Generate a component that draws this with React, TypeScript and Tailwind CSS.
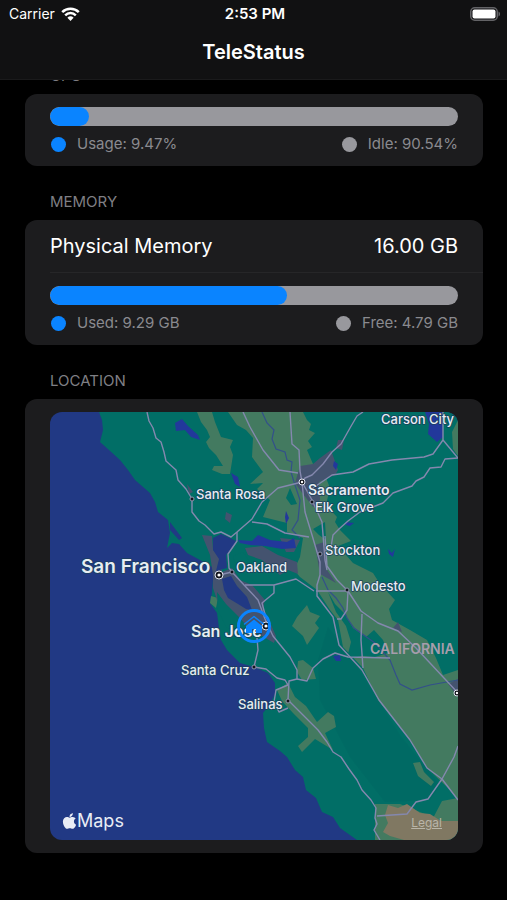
import type { ReactNode } from 'react';
import { FaApple } from 'react-icons/fa';

const WATER = '#213984';
const FOREST = '#016e66';
const VALLEY = '#437a60';
const URBAN = '#44536f';
const ROAD = '#8488ae';

const roads = [
  // US-101 north
  'M147 412 L149 421 L153 428 L156 438 L161 442 L164 452 L166 461 L176 470 L178 480 L186 489 L192 499 L192 512 L199 521 L205 525 L214 534 L221 532 L231 537 L237 532',
  // I-80
  'M237 532 L252 519 L262 502 L278 488 L302 482 L305 478 L312 475 L323 464 L332 452 L341 444 L350 428 L357 416 L363 412',
  'M237 532 L237 541 L228 554 L229 568 L232 572 L219 575',
  // I-5 north
  'M250 427 L263 450 L279 470 L298 473 M290 412 L292 444 L299 450 L300 471 L302 482',
  'M243 412 L250 427',
  // US-50
  'M313 488 L332 475 L353 472 L369 464 L392 460 L424 457 L433 454 L443 440 L443 412',
  'M458 458 L445 459 L441 467 L430 468 L424 477 L416 481 L412 486 L393 493 L383 503 L360 512 L348 521 L339 529 L333 535 L331 547',
  'M443 440 L458 458',
  'M302 482 L312 500 L322 522 L325 560 L327 570',
  'M302 482 L305 512 L312 535 L317 552 L320 562 L320 575 L317 585 L317 596 L333 617 L339 645 L362 670 L379 700 L410 740 L427 768 L442 779 L458 800',
  'M325 536 L327 566 L337 580 L348 591 L361 611 L378 623 L398 631 L416 648 L458 693',
  'M232 572 L245 586 L258 600 L265 619 L273 636 L290 657 L297 670 L297 679 L289 681 L288 700 L303 715 L318 730 L327 742 L333 752 L341 757 L349 769 L357 780 L362 790 L371 800 L376 808 L375 818 L377 824 L374 830 L380 840',
  'M245 585 L274 585 L296 579 L314 591 M274 585 L274 593 L262 603 L266 618',
  'M254 667 L258 650 L257 638',
  'M254 667 L266 669 L277 678 L285 680 L288 685 L276 690 L274 702 L279 712 L288 708',
  'M297 679 L307 681 L313 668 L323 659 L335 653 L348 657 L390 658',
  'M362 614 L361 640 L363 668',
  'M348 591 L347 610 L341 619 L337 619',
  'M316 591 L347 591',
  'M252 522 L267 524 L285 533 L309 537',
  'M377 816 L407 814 L416 802 L428 799 L442 779 L454 757 L458 746',
];

const rivers = [
  'M262 412 L267 423 L274 430 L272 439 L276 449 L285 452 L287 460 L292 462 L291 472 L294 482 L300 500 L298 520 L292 530 L300 538',
  'M322 577 L328 590 L336 598 L343 608 L347 618 L354 628 L365 636 L375 643 L390 660 L396 675 L400 684 L412 690 L430 685 L458 680',
];

const cities = [
  { x: 192, y: 499, r: 2 },
  { x: 302, y: 482, r: 3, major: true },
  { x: 312, y: 502, r: 2 },
  { x: 320, y: 554, r: 2 },
  { x: 347, y: 590, r: 2 },
  { x: 232, y: 572, r: 2 },
  { x: 219, y: 575, r: 4, major: true },
  { x: 266, y: 626, r: 4, major: true },
  { x: 254, y: 667, r: 2 },
  { x: 288, y: 701, r: 2 },
  { x: 457, y: 693, r: 3, major: true },
];

const labels = [
  { name: 'Carson City', x: 381, y: 424, cls: 'text-[13px] font-medium' },
  { name: 'Santa Rosa', x: 196, y: 499, cls: 'text-[13px] font-medium' },
  { name: 'Sacramento', x: 308, y: 495, cls: 'text-[14px] font-semibold' },
  { name: 'Elk Grove', x: 315, y: 512, cls: 'text-[13px] font-medium' },
  { name: 'Stockton', x: 325, y: 555, cls: 'text-[13px] font-medium' },
  { name: 'Modesto', x: 351, y: 591, cls: 'text-[13px] font-medium' },
  { name: 'Oakland', x: 236, y: 572, cls: 'text-[13px] font-medium' },
  { name: 'San Francisco', x: 81, y: 573, cls: 'text-[19px] font-semibold' },
  { name: 'San Jose', x: 191, y: 637, cls: 'text-[16px] font-semibold' },
  { name: 'Santa Cruz', x: 181, y: 675, cls: 'text-[13px] font-medium' },
  { name: 'Salinas', x: 238, y: 709, cls: 'text-[13px] font-medium' },
];

function WifiIcon() {
  return (
    <svg className="h-[14px] w-[19px]" viewBox="0 0 19 14" fill="none" stroke="#fff" strokeWidth="2.5">
      <path d="M1.2 5.1 A11.8 11.8 0 0 1 17.8 5.1" />
      <path d="M4.2 8.3 A7.5 7.5 0 0 1 14.8 8.3" />
      <path d="M9.5 14 L6.4 10.7 A4.6 4.6 0 0 1 12.6 10.7 Z" fill="#fff" stroke="none" />
    </svg>
  );
}

function BatteryIcon() {
  return (
    <svg className="h-[14px] w-[31px]" viewBox="0 0 31 14">
      <rect x="0.75" y="0.75" width="26.5" height="12.5" rx="4" fill="none" stroke="#636366" strokeWidth="1.5" />
      <rect x="2.5" y="2.5" width="23" height="9" rx="2" fill="#fff" />
      <path d="M28.5 4.5 C30.6 5.4 30.6 8.6 28.5 9.5 Z" fill="#636366" />
    </svg>
  );
}

function Section({ title, children }: { title: string; children: ReactNode }) {
  return (
    <section>
      <h2 className="px-[25px] pt-6 pb-[6px] text-[15px] leading-6 text-[#7f7f84] uppercase">{title}</h2>
      <div className="overflow-hidden rounded-xl bg-[#1c1c1e]">{children}</div>
    </section>
  );
}

function UsageBar({ label, percent, left, right }: { label: string; percent: number; left: string; right: string }) {
  return (
    <div className="px-[25px] pt-[13px] pb-3">
      <div
        role="progressbar"
        aria-label={label}
        aria-valuenow={percent}
        aria-valuemin={0}
        aria-valuemax={100}
        className="h-[19px] overflow-hidden rounded-full bg-[#98989d]"
      >
        <div className="h-full rounded-full bg-[#0a84ff]" style={{ width: `${percent}%` }} />
      </div>
      <div className="mt-2 flex justify-between text-[15px] leading-5 text-[#8a8a8f]">
        <span className="flex items-center gap-[11px]">
          <span className="ml-px h-[15px] w-[15px] rounded-full bg-[#0a84ff]" />
          {left}
        </span>
        <span className="flex items-center gap-[11px]">
          <span className="h-[15px] w-[15px] rounded-full bg-[#98989d]" />
          {right}
        </span>
      </div>
    </div>
  );
}

function LocationMap() {
  return (
    <div className="relative aspect-[408/428] overflow-hidden rounded-xl">
      <svg className="block h-full w-full" viewBox="50 412 408 428" preserveAspectRatio="xMidYMid slice">
        <rect x="50" y="412" width="408" height="428" fill={WATER} />
        {/* land */}
        <path
          fill={FOREST}
          d="M99 412 L102 420 L103 430 L100 442 L109 450 L120 460 L128 470 L135 480 L150 493 L155 502 L158 512 L168 520 L170 533 L167 548 L172 543 L179 544 L187 553 L200 560 L212 567 L216 571 L213 580 L212 593 L210 603 L217 613 L219 628 L221 640 L227 650 L240 663 L254 667 L268 673 L275 683 L275 694 L270 704 L263 713 L264 728 L267 742 L280 751 L287 757 L295 770 L303 777 L306 790 L316 798 L322 812 L333 817 L340 828 L357 840 L458 840 L458 412 Z"
        />
        <path fill="#01635f" opacity="0.3" d="M328 627 L350 655 L400 735 L440 785 L430 800 L385 802 L350 757 L320 700 L318 660 Z" />

        {/* central valley and grassland */}
        <g fill={VALLEY}>
          <path d="M228 412 L303 412 L307 420 L311 424 L309 430 L315 433 L308 441 L312 447 L307 450 L313 464 L323 470 L330 488 L326 505 L337 517 L335 522 L340 530 L351 541 L338 546 L353 563 L373 573 L380 584 L395 600 L389 609 L392 620 L410 630 L427 640 L436 658 L443 675 L458 670 L458 800 L447 787 L427 768 L410 740 L378 700 L363 668 L343 647 L338 620 L330 610 L317 590 L300 577 L294 570 L300 557 L303 538 L287 532 L287 523 L263 517 L270 500 L257 489 L263 483 L250 484 L263 472 L252 457 L253 438 L246 430 L237 425 Z" />
          <path d="M197 412 L212 412 L215 422 L221 437 L233 440 L230 447 L233 455 L230 474 L222 474 L212 470 L214 466 L223 466 L216 455 L209 448 L206 442 L210 437 L207 430 L201 422 Z" />
          <path d="M307 605 L310 612 L320 616 L315 623 L319 628 L307 645 L303 636 L292 626 L297 617 Z" />
          <path d="M298 661 L303 660 L313 668 L316 679 L302 680 L297 672 Z" />
          <path d="M277 690 L288 683 L295 697 L306 706 L317 722 L328 712 L334 716 L336 727 L325 733 L333 750 L315 739 L302 752 L298 746 L308 737 L308 728 L293 713 L282 701 Z" />
          <path d="M413 763 L420 762 L424 772 L434 782 L431 786 L418 776 Z" />
          <path d="M375 804 L400 804 L440 820 L432 820 L442 801 L458 798 L458 840 L375 840 Z" />
          <path d="M452 432 L458 420 L458 456 L453 449 Z" />
          <path d="M211 596 L218 598 L216 608 L210 603 Z" />
        </g>
        <path fill="#807862" d="M388 805 L398 808 L407 804 L420 813 L430 814 L441 821 L458 821 L458 840 L404 840 L390 836 L383 832 L388 823 L385 815 Z" />
        <path fill={FOREST} d="M328 592 L335 604 L345 614 L353 628 L366 637 L374 630 L383 640 L388 653 L375 657 L362 656 L353 658 L348 654 L351 642 L346 626 L336 612 Z M290 488 L297 504 L291 505 L286 498 Z M313 529 L325 522 L326 540 L319 535 Z" />

        {/* built-up areas */}
        <g fill={URBAN}>
          <path d="M300 466 L313 464 L320 458 L331 450 L338 470 L335 475 L319 482 L320 500 L313 507 L300 490 L295 483 Z" />
          <path d="M315 545 L324 542 L327 570 L336 583 L320 574 Z" />
          <path d="M202 535 L212 536 L213 550 L220 555 L222 572 L232 568 L240 580 L252 585 L265 600 L263 608 L268 618 L276 636 L274 643 L262 636 L245 628 L228 614 L217 600 L213 588 L213 575 L210 555 Z" />
          <path d="M245 548 L262 546 L278 555 L297 562 L298 574 L288 570 L280 575 L262 560 L248 555 Z" />
          <path d="M280 538 L300 540 L294 552 L286 552 Z M226 512 L232 515 L230 523 L225 519 Z M187 484 L193 492 L189 494 Z M393 628 L398 622 L402 632 Z M448 684 L458 679 L458 697 Z M338 440 L344 440 L342 450 L336 448 Z" />
        </g>

        {/* bays, lakes and delta */}
        <g fill="#22389b">
          <path d="M175 423 L182 419 L188 426 L198 435 L200 440 L191 437 L185 430 L176 431 Z" />
          <path d="M231 473 L238 477 L240 487 L235 484 Z" />
          <path d="M425 412 L442 412 L443 437 L437 442 L428 434 L429 424 Z" />
          <path d="M286 511 L289 518 L286 524 L285 517 Z M345 522 L354 523 L350 526 L346 525 Z M334 461 L338 464 L336 470 L333 466 Z M333 656 L340 655 L341 661 L336 661 Z M388 549 L392 553 L395 549 L393 557 L389 554 Z" />
          <path d="M238 540 L252 541 L258 535 L270 540 L287 542 L294 538 L296 548 L282 549 L265 546 L250 545 L240 543 Z" />
        </g>
        <g fill={WATER}>
          <path d="M213 538 L221 534 L230 538 L236 541 L233 547 L226 555 L227 568 L216 571 L219 559 L213 550 Z" />
          <path d="M222 579 L231 576 L237 586 L247 597 L252 610 L246 609 L238 604 L228 598 L224 590 Z" />
          <path d="M170 522 L182 538 L179 540 L170 530 Z" />
        </g>
        <path fill={FOREST} d="M233 556 L243 552 L250 562 L266 570 L273 584 L256 583 L246 575 L236 566 Z M217 592 L226 604 L240 618 L250 630 L246 637 L226 627 L218 610 Z" />

        <g fill="none" stroke="#33508a" strokeWidth="1.2">
          {rivers.map((d) => <path key={d} d={d} />)}
        </g>
        <g fill="none" stroke={ROAD} strokeWidth="1.4" strokeLinejoin="round">
          {roads.map((d) => <path key={d} d={d} />)}
        </g>

        {cities.map((c) => (
          <g key={`${c.x}-${c.y}`}>
            <circle cx={c.x} cy={c.y} r={c.r} fill="#12151c" stroke={c.major ? '#dfe3ee' : '#8b93ac'} strokeWidth="1" />
            {c.major && <circle cx={c.x} cy={c.y} r={c.r / 2.5} fill="#fff" />}
          </g>
        ))}
        <text x="370" y="654" fill="#a79dac" className="text-[14px] font-semibold">CALIFORNIA</text>
        <g fill="#e6edf3" stroke="#1b3f5c" strokeWidth="1.5" strokeLinejoin="round" paintOrder="stroke">
          {labels.map((l) => (
            <text key={l.name} x={l.x} y={l.y} className={l.cls}>{l.name}</text>
          ))}
        </g>

        {/* current device */}
        <g fill="none" stroke="#0a84ff">
          <circle cx="254" cy="626" r="15.5" strokeWidth="3" />
          <path d="M244.5 624 L254 616.5 L263.5 624" strokeWidth="1.5" strokeLinecap="round" strokeLinejoin="round" />
          <path d="M254 619.5 L262 626 V633 H256 V629 H252 V633 H246 V626 Z" fill="#0a84ff" stroke="none" />
        </g>
      </svg>
      <div className="absolute bottom-[7px] left-3 flex items-center text-[18px] leading-6 text-[#e9edf5]">
        <FaApple className="h-[18px] w-[15px]" />
        Maps
      </div>
      <a href="#legal" className="absolute right-4 bottom-[9px] text-[12px] leading-4 text-[#b9b5a8] underline">
        Legal
      </a>
    </div>
  );
}

export default function App() {
  return (
    <div className="min-h-screen bg-black font-['Inter',sans-serif] text-white">
      <header className="sticky top-0 z-10 h-20 border-b border-[#1a1a1b] bg-[#111112]">
        <div className="grid h-7 grid-cols-3 items-center pr-[6px] pl-[9px] leading-5">
          <span className="flex items-center gap-[6px] text-[14px]">
            Carrier
            <WifiIcon />
          </span>
          <span className="text-center text-[15px] font-semibold">2:53 PM</span>
          <span className="flex justify-end">
            <BatteryIcon />
          </span>
        </div>
        <h1 className="pt-2 text-center text-[20px] leading-8 font-semibold">TeleStatus</h1>
      </header>

      <main className="-mt-10 pr-6 pb-12 pl-[25px]">
        <Section title="CPU">
          <UsageBar label="CPU usage" percent={9.47} left="Usage: 9.47%" right="Idle: 90.54%" />
        </Section>

        <Section title="Memory">
          <div className="ml-[25px] flex h-[53px] items-center justify-between border-b border-[#262628] pr-[25px] text-[20px] leading-6">
            <span>Physical Memory</span>
            <span>16.00 GB</span>
          </div>
          <UsageBar label="Memory used" percent={58.06} left="Used: 9.29 GB" right="Free: 4.79 GB" />
        </Section>

        <Section title="Location">
          <div className="px-[25px] py-[13px]">
            <LocationMap />
          </div>
        </Section>
      </main>
    </div>
  );
}
